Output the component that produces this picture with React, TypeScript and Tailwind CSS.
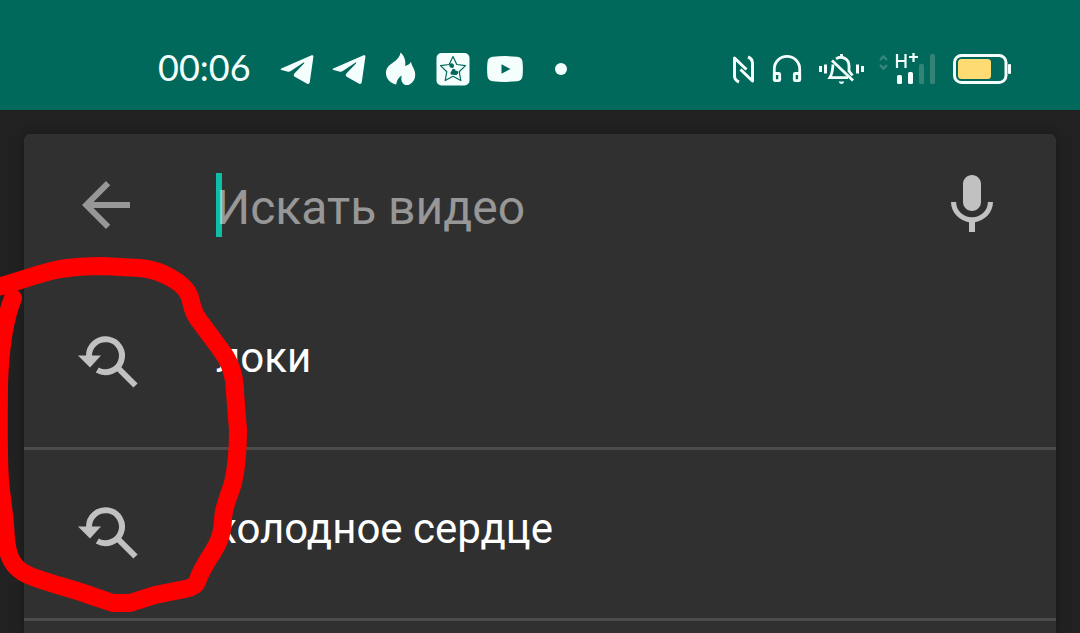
import { useState } from "react";

const suggestions = ["локи", "холодное сердце"];

function TelegramIcon() {
  return (
    <svg className="h-9 w-9" viewBox="0 0 36 36" fill="#f4fffd" aria-hidden="true">
      <path d="M2.3 17.600 32.600 4.300c1.200-.5 2 .2 1.800 1.400L30.800 31c-.3 1.800-1.600 2.400-3.100 1.600l-11.500-6.600c-1.800-1.100-1.900-2.400-.6-3.800l9.400-9.600c.9-1-.1-1.400-1.200-.7L11.800 20c-1.200.8-2.300.8-3.600.4l-5.700-1.300c-1.100-.4-1.100-1-.2-1.500Z" />
    </svg>
  );
}

function FlameIcon() {
  return (
    <svg className="h-9 w-9" viewBox="382 51 36 36" fill="#f4fffd" aria-hidden="true">
      <path d="M399.500 52.500c3.500 3 5.500 7.500 4.700 13.500 2.700-.8 4.600-2 5.800-4.300.5 4.300 4.200 7.300 4.200 12.800 0 5.500-2.700 8.500-6.700 10.500h-3.500c-2.800-2-4.600-4.500-3.200-9.500-3 1.500-5 4.500-5.600 9-4.700-.9-10.200-5-10.200-11.300 0-5.200 2.500-7.400 6.500-10.200 4.500-3.200 7.200-5.700 8-10.500Z" />
    </svg>
  );
}

function StarIcon() {
  return (
    <svg className="h-9 w-9" viewBox="434 51 36 36" aria-hidden="true">
      <rect x="435.500" y="53" width="33" height="32.500" rx="5" fill="#f4fffd" />
      <path
        d="m452 56.500 3.800 8 8.700 1.100-6.300 6.100 1.600 8.800-7.800-4.200-7.800 4.200 1.600-8.800-6.300-6.100 8.700-1.100Z"
        fill="none"
        stroke="#00695c"
        strokeWidth="1.200"
        strokeLinejoin="round"
      />
      <path
        d="M448.500 64.500c1.500-2.500 4.700-.8 4.500 1.400s-2.500 2.300-3 1.600c-1.500-.2-2-1.500-1.500-3Zm2.700 5c1.300-1.800 3.500 0 3.500 1.200 1.900-.4 2.900 1 2.400 2.500-.7 2.200-3.500 2-4.700 1.500-2.500.5-3.300-1-2.800-2.300.3-.8 1.300-1.600 1.600-2.900Z"
        fill="#00695c"
      />
    </svg>
  );
}

function VideoIcon() {
  return (
    <svg className="h-9 w-9" viewBox="486 51 36 36" aria-hidden="true">
      <path
        d="M492 56.700q12-1.200 24 0 5 .3 5.500 5 .8 7.300 0 14.600-.5 4.700-5.500 5-12 1.200-24 0-5-.3-5.500-5-.8-7.300 0-14.600.5-4.700 5.500-5Z"
        fill="#f4fffd"
      />
      <path d="M500.500 64.300v9.400l9-4.700Z" fill="#00695c" />
    </svg>
  );
}

function NfcIcon() {
  return (
    <svg className="h-9 w-7" viewBox="730 51 28 36" fill="none" stroke="#f4fffd" strokeWidth="3" aria-hidden="true">
      <path d="M740 82c-3.200-1.300-4.500-3-4.500-6V58l12 11.500" strokeLinejoin="round" />
      <path d="M749 57c3.200 1.300 4.500 3 4.500 6v18L741.500 69.500" strokeLinejoin="round" />
    </svg>
  );
}

function HeadphonesIcon() {
  return (
    <svg className="h-9 w-9" viewBox="769 51 36 36" fill="none" stroke="#f4fffd" strokeWidth="2.800" aria-hidden="true">
      <path d="M774.300 80V69a12.700 12.700 0 0 1 25.400 0v11" />
      <rect x="774.300" y="73.500" width="5.400" height="7.200" rx="1" />
      <rect x="794.300" y="73.500" width="5.400" height="7.200" rx="1" />
    </svg>
  );
}

function SilentIcon() {
  return (
    <svg className="h-9 w-12" viewBox="817 51 48 36" fill="none" stroke="#f4fffd" strokeWidth="2.800" aria-hidden="true">
      <path d="M820.500 66v6M825.500 64.500v9M857.500 64.500v9M862.500 66v6" strokeWidth="3" />
      <path d="m832 60.500 21 20" />
      <path d="M833 64.500c-.5 5-.2 8.500-3.200 13.200H848" />
      <path d="M836 58.800c5.500-3.600 13-.3 13 7.200v5l3.500 4.500M841.500 54v3" />
      <path d="M838.800 81.500h5.400c-.5 1.800-1.600 2.500-2.700 2.500s-2.200-.7-2.700-2.500Z" fill="#f4fffd" stroke="none" />
    </svg>
  );
}

function SignalIcon() {
  return (
    <svg className="h-9 w-15" viewBox="877 51 60 36" fill="none" aria-hidden="true">
      <path d="m880 60 3.500-3.500L887 60M880 65l3.500 3.500L887 65" stroke="#37877c" strokeWidth="2.400" />
      <path d="M897 54v14M905.500 54v14M897 61h8.500M909 57h9M913.500 53v9" stroke="#f4fffd" strokeWidth="2.200" />
      <rect x="897" y="75" width="5" height="9" rx="1.500" fill="#f4fffd" />
      <rect x="908" y="72" width="5" height="12" rx="1.500" fill="#f4fffd" />
      <rect x="919" y="64" width="5" height="20" rx="1.500" fill="#338377" />
      <rect x="930" y="54" width="5" height="30" rx="1.500" fill="#338377" />
    </svg>
  );
}

function BatteryIcon() {
  return (
    <svg className="h-9 w-15" viewBox="953 51 60 36" fill="none" aria-hidden="true">
      <rect x="954.500" y="55.500" width="51.500" height="27" rx="7" stroke="#f4fffd" strokeWidth="3" />
      <rect x="958" y="59" width="33" height="20" rx="3.500" fill="#ffdc73" />
      <rect x="1008" y="64" width="3" height="10" rx="1" fill="#f4fffd" />
    </svg>
  );
}

function BackIcon() {
  return (
    <svg className="h-18 w-18" viewBox="0 0 24 24" fill="#979797" aria-hidden="true">
      <path d="M20 11H7.830l5.590-5.590L12 4l-8 8 8 8 1.410-1.410L7.830 13H20v-2z" />
    </svg>
  );
}

function MicIcon() {
  return (
    <svg className="h-18 w-18" viewBox="0 0 24 24" fill="#c1c1c1" aria-hidden="true">
      <path d="M12 14c1.660 0 3-1.340 3-3V5c0-1.660-1.340-3-3-3S9 3.340 9 5v6c0 1.660 1.340 3 3 3zm5.300-3c0 3-2.540 5.100-5.300 5.100S6.700 14 6.700 11H5c0 3.410 2.720 6.230 6 6.720V21h2v-3.280c3.280-.48 6-3.300 6-6.720h-1.700z" />
    </svg>
  );
}

function RecentSearchIcon() {
  return (
    <svg className="h-18 w-18 shrink-0" viewBox="0 0 72 72" aria-hidden="true">
      <path d="M19 29a16.500 16.500 0 1 1 8.300 14" fill="none" stroke="#c1c1c1" strokeWidth="6" />
      <path d="M8 28.500h23L20 40.500Z" fill="#c1c1c1" />
      <path d="m46.500 39.500 19 19" fill="none" stroke="#c1c1c1" strokeWidth="6" />
    </svg>
  );
}

// Freehand marker loop over the history icons
function MarkerLoop() {
  return (
    <svg
      className="pointer-events-none absolute top-0 left-0 h-[633px] w-64"
      viewBox="0 0 256 633"
      fill="none"
      stroke="#ff0000"
      strokeWidth="18"
      strokeLinecap="round"
      strokeLinejoin="round"
      aria-hidden="true"
    >
      <path d="M-6 288C12 284 35 274 60 269Q80 266 102 266L140 268C162 270 184 283 189 295C192 302 191 309 198 319L221 350C231 363 235 378 235 392L238 430C238 450 237 466 233 483C228 499 223 508 223 520C223 532 220 541 213 552C205 564 200 573 197 582Q195 587 185 589L155 595L130 603H113L92 596C70 588 40 581 26 574C12 567 8 556 6 540C5 515 1 495 0 480C-2 450 -1 410 -1 385C0 350 5 318 13 298" />
    </svg>
  );
}

export default function App() {
  const [query, setQuery] = useState("");

  return (
    <div className="relative flex h-screen flex-col overflow-hidden bg-[#212121] font-[Roboto,sans-serif]">
      {/* Status bar */}
      <header className="flex h-[110px] shrink-0 items-center bg-[#00695c] pt-7 pr-[67px] pl-[158px]">
        <span className="pb-1 font-[Lato,sans-serif] text-4xl text-[#f4fffd]">00:06</span>
        <div className="flex flex-1 items-center gap-4 pl-7">
          <TelegramIcon />
          <TelegramIcon />
          <FlameIcon />
          <StarIcon />
          <VideoIcon />
          <span className="ml-4 h-3 w-3 rounded-full bg-[#f4fffd]" />
        </div>
        <div className="flex items-center gap-4">
          <div className="flex items-center gap-3">
            <NfcIcon />
            <HeadphonesIcon />
            <SilentIcon />
            <SignalIcon />
          </div>
          <BatteryIcon />
        </div>
      </header>

      {/* Search card */}
      <main className="mx-6 mt-6 flex-1 rounded-t-md bg-[#303030] shadow-[0_0_8px_rgba(0,0,0,0.3)]">
        <form className="flex h-[145px] items-center pr-12 pb-1 pl-[46px]" onSubmit={(e) => e.preventDefault()}>
          <button type="button" aria-label="Назад">
            <BackIcon />
          </button>
          <div className="relative ml-[74px] flex h-16 min-w-0 flex-1 items-center">
            <span className="absolute inset-y-0 left-0 w-1.5 bg-[#0fbfa5]" />
            <input
              type="text"
              aria-label="Искать видео"
              placeholder="Искать видео"
              value={query}
              onChange={(e) => setQuery(e.target.value)}
              className="relative h-full w-full bg-transparent pt-1.5 text-5xl text-white outline-none placeholder:text-white/50"
            />
          </div>
          <button type="button" aria-label="Голосовой поиск">
            <MicIcon />
          </button>
        </form>

        <ul>
          {suggestions.map((text) => (
            <li key={text} className="border-b-3 border-[#4c4c4c]">
              <button
                type="button"
                onClick={() => setQuery(text)}
                className="flex h-42 w-full items-center gap-[74px] pl-[46px] text-left text-[42px] text-white"
              >
                <RecentSearchIcon />
                <span className="pb-3">{text}</span>
              </button>
            </li>
          ))}
        </ul>
      </main>

      <MarkerLoop />
    </div>
  );
}
